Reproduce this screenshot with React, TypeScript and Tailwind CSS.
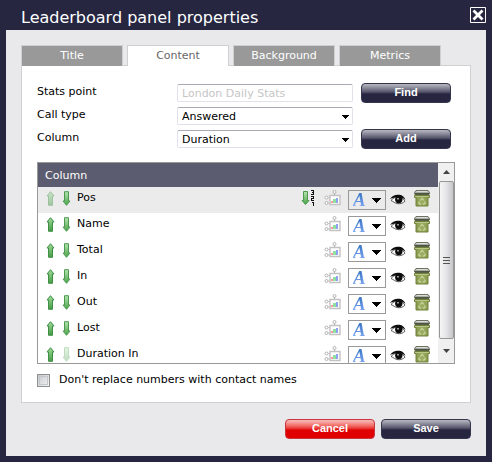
import { useState } from "react";
import type { ReactNode } from "react";

const tabs = ["Title", "Content", "Background", "Metrics"];
const columns = ["Pos", "Name", "Total", "In", "Out", "Lost", "Duration In"];

function UpArrow() {
  return (
    <svg width="10" height="15" viewBox="0 0 10 15" aria-hidden="true">
      <path d="M4.500 .7 8 5H6.500v9.300h-4V5H1z" fill="url(#arrowUp)" stroke="#3f8f45" strokeWidth="1" />
    </svg>
  );
}

function DownArrow() {
  return (
    <svg width="10" height="15" viewBox="0 0 10 15" aria-hidden="true">
      <path d="M4.500 14.300 8 10H6.500V.7h-4V10H1z" fill="url(#arrowDown)" stroke="#4c9a50" strokeWidth="1" />
    </svg>
  );
}

function SortIcon() {
  return (
    <svg width="15" height="16" viewBox="0 0 15 16" aria-hidden="true">
      <path d="M4.500 14.500 8 10.500H6.500v-9h-4v9H1z" fill="url(#arrowDown)" stroke="#4c9a50" />
      <path
        d="M10 .5h2.500v4H10M10.500 2.500h2M10 6.500h2.500v2h-2v2H13M10.500 12.500h1.500v3"
        fill="none"
        stroke="#111"
        shapeRendering="crispEdges"
      />
    </svg>
  );
}

function ChartIcon() {
  return (
    <svg width="17" height="16" viewBox="0 0 17 16" aria-hidden="true">
      <path d="M10.500 3v3" stroke="#aaa" />
      <g fill="#fff" stroke="#aaa" strokeWidth=".9">
        <circle cx="10.500" cy="2" r="1.500" />
        <circle cx="2.500" cy="7.500" r="1.500" />
        <circle cx="2.500" cy="13" r="1.500" />
      </g>
      <path d="M4 7.500h2M4 13h2" stroke="#c4c4c4" />
      <path d="M6 5.500h10v9H6z" fill="#fff" stroke="#c2c2c2" strokeWidth="1.400" />
      <g shapeRendering="crispEdges">
        <path d="M7 11h2v2H7z" fill="#f79a9a" />
        <path d="M9 9h3v4H9z" fill="#8fe29d" />
        <path d="M12 8h2v5h-2z" fill="#8f9ff5" />
      </g>
    </svg>
  );
}

function EyeIcon() {
  return (
    <svg width="16" height="11" viewBox="0 0 16 11" aria-hidden="true">
      <path d="M1 6.500C3.500 3.500 6 2.800 8.500 3c3 .3 5 2 6.500 4.200-2 2-4.500 2.800-7 2.500C5 9.400 3.500 7.500 1 6.500z" fill="#fff" stroke="#333" strokeWidth=".8" />
      <path d="M0 5C2.500 1.200 6 .2 9.500.8c3 .5 5 2.200 6 5.200C13.500 4 11 3 8 3S2.500 4 0 5z" fill="#0c0c0c" />
      <circle cx="8.800" cy="5.600" r="3.700" fill="#0c0c0c" />
      <path d="M7 4h2v1.500H7z" fill="#999" />
    </svg>
  );
}

function BinIcon() {
  return (
    <svg width="16" height="17" viewBox="0 0 16 17" aria-hidden="true">
      <path d="M2 .5h12l1.500 2v1.500H.5V2.500z" fill="#a9aba4" stroke="#6d7262" />
      <path d="M2.500 1.500h11" stroke="#dcdcd8" />
      <path d="M1 4h14" stroke="#38432a" strokeWidth="1.500" />
      <path d="M.5 5.500h15v2h-1.500v8.500H2V7.500H.5z" fill="url(#bin)" stroke="#71813a" />
      <path d="M1 6.500h14" stroke="#b8c886" />
      <path
        d="m6.300 10.500 1.300-1.800h1l1.100 1.700M10.600 11.500l.7 1.300-.7 1.200H9M7 14H5.400l-.7-1.200.8-1.300"
        fill="none"
        stroke="#dce6b8"
      />
    </svg>
  );
}

function Caret() {
  return (
    <svg width="9" height="5" viewBox="0 0 9 5" aria-hidden="true">
      <path d="M0 0h9v1H8v1H7v1H6v1H5v1H4V4H3V3H2V2H1V1H0z" fill="#000" shapeRendering="crispEdges" />
    </svg>
  );
}

function SmallCaret() {
  return (
    <svg width="7" height="4" viewBox="0 0 7 4" aria-hidden="true">
      <path d="M0 0h7v1H6v1H5v1H4v1H3V3H2V2H1V1H0z" fill="#000" shapeRendering="crispEdges" />
    </svg>
  );
}

function Gradients() {
  return (
    <svg className="absolute size-0" aria-hidden="true">
      <defs>
        <linearGradient id="arrowUp" x1="0" y1="0" x2="0" y2="1">
          <stop offset="0" stopColor="#a0dc9a" />
          <stop offset="1" stopColor="#459a45" />
        </linearGradient>
        <linearGradient id="arrowDown" x1="0" y1="0" x2="0" y2="1">
          <stop offset="0" stopColor="#b5e6ae" />
          <stop offset="1" stopColor="#4aa04a" />
        </linearGradient>
        <linearGradient id="bin" x1="0" y1="0" x2="1" y2="0">
          <stop offset="0" stopColor="#84954a" />
          <stop offset=".5" stopColor="#9fb065" />
          <stop offset="1" stopColor="#84954a" />
        </linearGradient>
      </defs>
    </svg>
  );
}

function Button({ children, danger = false }: { children: ReactNode; danger?: boolean }) {
  const tone = danger
    ? "border-[#c8353c] bg-linear-to-b from-[#f7b3b3] from-5% via-[#e93c3c] via-45% to-[#e00000] to-55%"
    : "border-[#35354e] bg-linear-to-b from-[#b0b0ba] from-5% via-[#55556b] via-45% to-[#262641] to-55%";

  return (
    <button
      type="button"
      className={`block h-5 w-[90px] shrink-0 rounded-[4px] border pb-0.5 font-['Liberation_Sans',sans-serif] text-[11px] leading-4 font-bold text-white ${tone}`}
    >
      {children}
    </button>
  );
}

const fieldClass =
  "block h-[18px] w-full appearance-none rounded-[2px] border border-[#dfe2ea] border-t-[#a9a9b1] bg-white px-1 pt-px text-[11px] leading-4";

function SelectField({ id, options }: { id: string; options: string[] }) {
  return (
    <div className="relative flex-1">
      <select id={id} className={`${fieldClass} text-black`}>
        {options.map((option) => (
          <option key={option}>{option}</option>
        ))}
      </select>
      <span className="pointer-events-none absolute top-2 right-1">
        <SmallCaret />
      </span>
    </div>
  );
}

function FormRow({ id, label, children, action }: { id: string; label: string; children: ReactNode; action?: ReactNode }) {
  return (
    <div className="flex h-[23px] items-center">
      <label htmlFor={id} className="w-[140px] shrink-0">
        {label}
      </label>
      {children}
      <div className="ml-2 w-[90px] shrink-0">{action}</div>
    </div>
  );
}

function ScrollBar() {
  return (
    <div className="flex w-4 shrink-0 flex-col items-center bg-[#f0f0f0]" aria-hidden="true">
      <div className="flex h-[18px] items-center">
        <svg width="7" height="4" viewBox="0 0 7 4">
          <path d="M3.500 0 7 4H0z" fill="#444" />
        </svg>
      </div>
      <div className="flex w-[15px] flex-1 flex-col items-center justify-center gap-0.5 rounded-[2px] border border-[#979797] bg-linear-to-r from-[#f5f5f5] via-[#e4e4e6] to-[#c6c6ca]">
        <span className="h-px w-[7px] bg-[#555]" />
        <span className="h-px w-[7px] bg-[#555]" />
        <span className="h-px w-[7px] bg-[#555]" />
      </div>
      <div className="flex h-6 items-center">
        <svg width="7" height="4" viewBox="0 0 7 4">
          <path d="M0 0h7L3.500 4z" fill="#444" />
        </svg>
      </div>
    </div>
  );
}

function ColumnRow({ name, first, last }: { name: string; first: boolean; last: boolean }) {
  return (
    <tr className={first ? "bg-[#ebebeb]" : "bg-white"}>
      <td className="h-[26px] p-0">
        <div className="flex h-[26px] items-start pt-[3px] pr-2 pl-2">
          <button type="button" aria-label="Move up" disabled={first} className="pt-px disabled:opacity-45">
            <UpArrow />
          </button>
          <button type="button" aria-label="Move down" disabled={last} className="ml-1.5 pt-px disabled:opacity-35">
            <DownArrow />
          </button>
          <span className="ml-[5px] flex-1 leading-4">{name}</span>
          {first ? (
            <button type="button" aria-label="Sort order">
              <SortIcon />
            </button>
          ) : null}
          <button type="button" aria-label="Thresholds" className="ml-2">
            <ChartIcon />
          </button>
          <button
            type="button"
            aria-label="Font"
            aria-haspopup="menu"
            className="ml-[7px] flex h-5 w-[38px] items-center justify-between border border-[#999] px-1"
          >
            <span className="bg-linear-to-b from-[#2f6fc0] to-[#86aef5] bg-clip-text pr-0.5 font-['Liberation_Serif',serif] text-[19px] leading-[18px] font-bold text-transparent italic">
              A
            </span>
            <Caret />
          </button>
          <button type="button" aria-label="Visibility" className="ml-1 pt-1">
            <EyeIcon />
          </button>
          <button type="button" aria-label="Remove" className="ml-2">
            <BinIcon />
          </button>
        </div>
      </td>
    </tr>
  );
}

export default function App() {
  const [activeTab, setActiveTab] = useState("Content");

  return (
    <div className="min-h-screen bg-[#262641] px-1.5 pb-1.5 font-['DejaVu_Sans',Verdana,sans-serif] text-[11px] text-black">
      <Gradients />
      <header className="flex h-[30px] items-center justify-between pl-[15px]">
        <h1 className="pt-1.5 text-[16px] leading-5 text-white">Leaderboard panel properties</h1>
        <button type="button" aria-label="Close">
          <svg width="16" height="16" viewBox="0 0 16 16" aria-hidden="true">
            <path d="M.5.5h15v15H.5z" fill="none" stroke="#fff" />
            <path d="m3.500 3.500 9 9m0-9-9 9" stroke="#fff" strokeWidth="2.800" />
          </svg>
        </button>
      </header>

      <main className="bg-[#e9e9eb] px-[15px] pt-[15px] pb-[17px]">
        <div role="tablist" className="relative -mb-px flex gap-1 pr-[30px]">
          {tabs.map((tab) => (
            <button
              key={tab}
              type="button"
              role="tab"
              aria-selected={tab === activeTab}
              onClick={() => setActiveTab(tab)}
              className={`h-[21px] flex-1 border border-b-0 border-[#d0d0d3] text-[11px] leading-5 ${
                tab === activeTab ? "bg-white text-[#666]" : "bg-[#999] text-white"
              }`}
            >
              {tab}
            </button>
          ))}
        </div>

        <section className="border border-[#d0d0d3] bg-white px-[15px] pt-[15px] pb-[14px]">
          <div className="pr-1">
            <FormRow id="stats-point" label="Stats point" action={<Button>Find</Button>}>
              <div className="flex-1">
                <input id="stats-point" type="text" placeholder="London Daily Stats" className={`${fieldClass} placeholder:text-[#c6c6c6]`} />
              </div>
            </FormRow>
            <FormRow id="call-type" label="Call type">
              <SelectField id="call-type" options={["Answered", "Missed"]} />
            </FormRow>
            <FormRow id="column" label="Column" action={<Button>Add</Button>}>
              <SelectField id="column" options={["Duration", "Count"]} />
            </FormRow>
          </div>

          <div className="mt-3 flex h-[202px] overflow-hidden border border-[#999]">
            <div className="flex-1 overflow-hidden">
              <table className="w-full border-collapse">
                <thead>
                  <tr>
                    <th className="h-6 bg-[#5c5c70] px-[7px] pt-0.5 pb-0 text-left font-normal text-white">Column</th>
                  </tr>
                </thead>
                <tbody>
                  {columns.map((name, index) => (
                    <ColumnRow key={name} name={name} first={index === 0} last={index === columns.length - 1} />
                  ))}
                </tbody>
              </table>
            </div>
            <ScrollBar />
          </div>

          <div className="mt-2 flex items-center gap-[9px]">
            <input
              id="keep-numbers"
              type="checkbox"
              className="size-[13px] appearance-none border border-[#8e8f8f] bg-linear-to-br from-[#c4c7cd] to-[#f6f6f6] outline-1 -outline-offset-3 outline-[#c3c6cb] checked:bg-[#5c5c70]"
            />
            <label htmlFor="keep-numbers" className="leading-4">
              Don't replace numbers with contact names
            </label>
          </div>
        </section>

        <footer className="mt-4 flex justify-end gap-1.5">
          <Button danger>Cancel</Button>
          <Button>Save</Button>
        </footer>
      </main>
    </div>
  );
}
